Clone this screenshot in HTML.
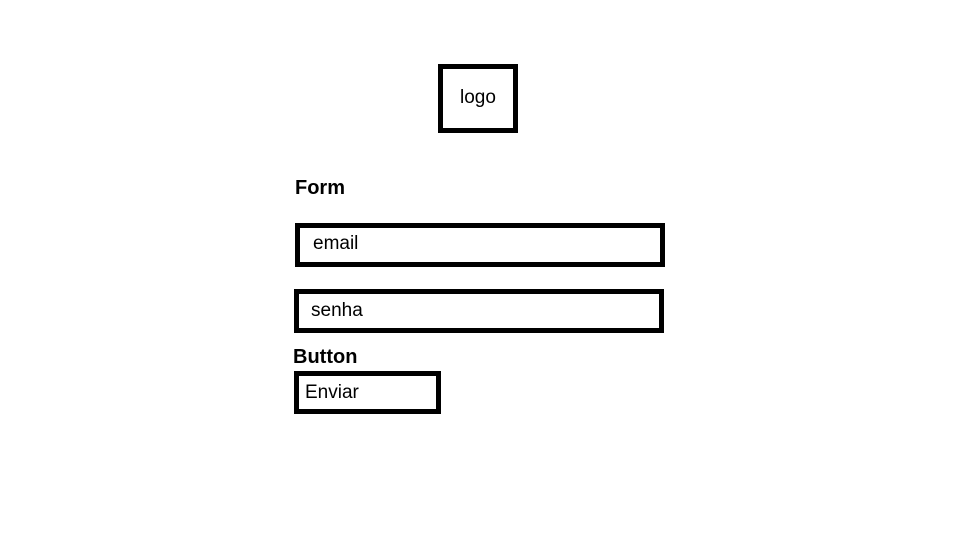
<!DOCTYPE html>
<html><head><style>
body{margin:0;width:960px;height:540px;background:#fff;position:relative;font-family:"Liberation Sans",sans-serif;color:#000;overflow:hidden}
.b{position:absolute;border:5px solid #000;box-sizing:border-box}
.t{position:absolute;font-size:19px;line-height:20px}
.h{position:absolute;font-size:20px;font-weight:bold;line-height:22px}
</style></head><body>
<div class="b" style="left:438px;top:64px;width:80px;height:69px"></div>
<div class="t" style="left:460px;top:88px">logo</div>
<div class="h" style="left:295px;top:177px">Form</div>
<div class="b" style="left:295px;top:223px;width:370px;height:44px"></div>
<div class="t" style="left:313px;top:234px">email</div>
<div class="b" style="left:294px;top:289px;width:370px;height:44px"></div>
<div class="t" style="left:311px;top:301px">senha</div>
<div class="h" style="left:293px;top:346px">Button</div>
<div class="b" style="left:294px;top:371px;width:147px;height:43px"></div>
<div class="t" style="left:305px;top:383px">Enviar</div>
</body></html>
